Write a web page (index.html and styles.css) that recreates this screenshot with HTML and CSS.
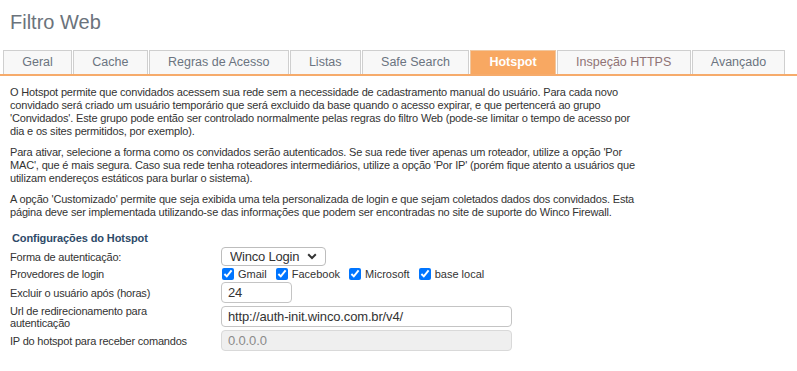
FILE: index.html
```html
<!DOCTYPE html>
<html lang="pt-BR">
<head>
<meta charset="utf-8">
<title>Filtro Web</title>
<link rel="stylesheet" href="styles.css">
</head>
<body>
<div class="page">
  <h1 class="title">Filtro Web</h1>
  <nav class="tabs">
    <a class="tab">Geral</a>
    <a class="tab">Cache</a>
    <a class="tab">Regras de Acesso</a>
    <a class="tab">Listas</a>
    <a class="tab">Safe Search</a>
    <a class="tab active">Hotspot</a>
    <a class="tab tab-alt">Inspeção HTTPS</a>
    <a class="tab">Avançado</a>
  </nav>
  <div class="content">
    <p>O Hotspot permite que convidados acessem sua rede sem a necessidade de cadastramento manual do usuário. Para cada novo convidado será criado um usuário temporário que será excluido da base quando o acesso expirar, e que pertencerá ao grupo 'Convidados'. Este grupo pode então ser controlado normalmente pelas regras do filtro Web (pode-se limitar o tempo de acesso por dia&nbsp;e os sites permitidos, por exemplo).</p>
    <p>Para ativar, selecione a forma como os convidados serão autenticados. Se sua rede tiver apenas um roteador, utilize a opção 'Por MAC', que é mais segura. Caso sua rede tenha roteadores intermediários, utilize a opção 'Por IP' (porém fique atento a usuários que utilizam endereços estáticos para burlar o sistema).</p>
    <p>A opção 'Customizado' permite que seja exibida uma tela personalizada de login e que sejam coletados dados dos convidados. Esta página deve ser implementada utilizando-se das informações que podem ser encontradas no site de suporte do Winco Firewall.</p>

    <section class="settings">
      <h2 class="settings-title">Configurações do Hotspot</h2>
      <div class="form-grid">
        <label class="lbl">Forma de autenticação:</label>
        <div class="ctl">
          <span class="select-wrap">
            <select class="select"><option>Winco Login</option></select>
            <svg class="chev" width="10" height="7" viewBox="0 0 10 7"><path d="M1.2 1.3 L5 5 L8.8 1.3" fill="none" stroke="#333" stroke-width="2"/></svg>
          </span>
        </div>

        <label class="lbl">Provedores de login</label>
        <div class="ctl checks">
          <label class="chk"><input type="checkbox" checked>Gmail</label>
          <label class="chk"><input type="checkbox" checked>Facebook</label>
          <label class="chk"><input type="checkbox" checked>Microsoft</label>
          <label class="chk"><input type="checkbox" checked>base local</label>
        </div>

        <label class="lbl">Excluir o usuário após (horas)</label>
        <div class="ctl"><input class="input short" type="text" value="24"></div>

        <label class="lbl">Url de redirecionamento para<br>autenticação</label>
        <div class="ctl"><input class="input wide" type="text" value="http://auth-init.winco.com.br/v4/"></div>

        <label class="lbl">IP do hotspot para receber comandos</label>
        <div class="ctl"><input class="input wide" type="text" value="0.0.0.0" disabled></div>
      </div>
    </section>
  </div>
</div>
</body>
</html>
```

FILE: styles.css
```css
html, body {
  margin: 0;
  padding: 0;
  background: #fff;
}

body {
  font-family: "Liberation Sans", Arial, sans-serif;
  color: #333;
}

.page {
  width: 797px;
}

.title {
  margin: 0;
  padding: 10px 0 0 10px;
  height: 40px;
  box-sizing: border-box;
  font-size: 20px;
  font-weight: normal;
  color: #6b737c;
  line-height: 24px;
}

.tabs {
  display: flex;
  gap: 1px;
  padding: 0 0 0 3px;
  margin-top: 10px;
  border-bottom: 2px solid #f6ab6b;
  align-items: flex-end;
}

.tab {
  display: block;
  height: 24px;
  box-sizing: border-box;
  padding: 0 18.25px;
  border: 1px solid #cfcfcf;
  border-bottom: none;
  background: #f8f8f8;
  color: #6b7480;
  font-size: 12.5px;
  line-height: 23px;
  text-align: center;
  white-space: nowrap;
}

.tab-alt {
  color: #8f7375;
}

.tab.active {
  background: #f8a862;
  border-color: #f1c79f;
  color: #fff;
  font-weight: bold;
}

.content {
  padding: 10px 0 0 10px;
}

.content p {
  margin: 0 0 8px 0;
  width: 642px;
  font-size: 11px;
  letter-spacing: -0.17px;
  line-height: 13px;
  color: #333;
}

.settings {
  margin-top: 13px;
}

.settings-title {
  margin: 0 0 2px 2px;
  font-size: 11px;
  letter-spacing: -0.1px;
  font-weight: bold;
  color: #2e4a68;
  line-height: 13px;
}

.form-grid {
  display: grid;
  grid-template-columns: 211px 1fr;
  grid-template-rows: 19px 13px 21px 24px 21px;
  row-gap: 1.5px;
  align-items: center;
}

.lbl {
  font-size: 11px;
  letter-spacing: -0.2px;
  line-height: 12px;
  color: #333;
}

.ctl {
  display: flex;
  align-items: center;
}

.select-wrap {
  position: relative;
  display: inline-block;
  height: 19px;
}

.select {
  display: block;
  appearance: none;
  -webkit-appearance: none;
  width: 105px;
  height: 19px;
  box-sizing: border-box;
  border: 1px solid #bdbdbd;
  border-radius: 4px;
  background: #fff;
  padding: 0 0 0 8px;
  font-family: "Liberation Sans", Arial, sans-serif;
  font-size: 13px;
  letter-spacing: -0.2px;
  color: #333;
  line-height: 17px;
}

.chev {
  position: absolute;
  right: 9px;
  top: 6px;
  pointer-events: none;
}

.checks {
  height: 13px;
}

.chk {
  display: inline-flex;
  align-items: center;
  font-size: 11px;
  color: #333;
  margin-right: 8px;
}

.chk input {
  margin: 0 4px 0 1px;
  width: 12px;
  height: 12px;
  accent-color: #0075ff;
}

.input {
  display: block;
  height: 21px;
  box-sizing: border-box;
  border: 1px solid #c4c4c4;
  border-radius: 4px;
  padding: 0 6px;
  font-family: "Liberation Sans", Arial, sans-serif;
  font-size: 13px;
  letter-spacing: -0.15px;
  color: #333;
  background: #fff;
}

.input.short {
  width: 71px;
}

.input.wide {
  width: 291px;
}

.input:disabled {
  background: #efefef;
  color: #8a8a8a;
  border-color: #d9d9d9;
}
```
